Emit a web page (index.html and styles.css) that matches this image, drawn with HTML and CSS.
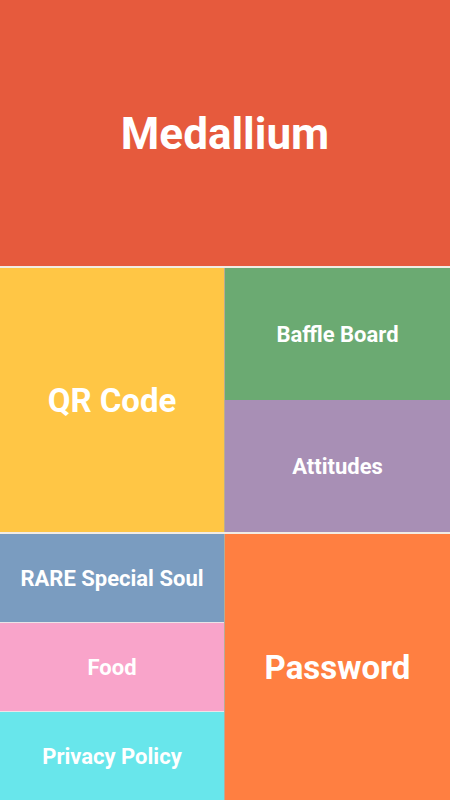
FILE: index.html
```html
<!DOCTYPE html>
<html>
<head>
<meta charset="utf-8">
<link rel="stylesheet" href="styles.css">
</head>
<body>
<div class="app">
  <div class="tile red big">Medallium</div>
  <div class="row">
    <div class="tile yellow mid">QR Code</div>
    <div class="col">
      <div class="tile green small">Baffle Board</div>
      <div class="tile purple small">Attitudes</div>
    </div>
  </div>
  <div class="row">
    <div class="col gapped">
      <div class="tile blue small">RARE Special Soul</div>
      <div class="tile pink small">Food</div>
      <div class="tile cyan small">Privacy Policy</div>
    </div>
    <div class="tile orange mid">Password</div>
  </div>
</div>
</body>
</html>
```
FILE: styles.css
```css
html, body {
  margin: 0;
  padding: 0;
}
body {
  width: 450px;
  height: 800px;
  overflow: hidden;
  font-family: Roboto, "Liberation Sans", sans-serif;
}
.app {
  display: grid;
  grid-template-rows: 266px 264px 266px;
  row-gap: 2px;
  height: 800px;
  background: #f2ece4;
}
.row {
  display: grid;
  grid-template-columns: 224px 1fr;
  column-gap: 1px;
  background: #b9ab95;
}
.col {
  display: grid;
  grid-template-rows: 1fr 1fr;
}
.col.gapped {
  grid-template-rows: 88px 88px 1fr;
  row-gap: 1px;
  background: #ece4e8;
}
.tile {
  display: flex;
  align-items: center;
  justify-content: center;
  color: #fff;
  font-weight: 700;
  text-align: center;
}
.big { font-size: 44px; padding-top: 2px; }
.mid { font-size: 33px; }
.small { font-size: 22px; }
.red { background: #e65a3d; }
.yellow { background: #ffc645; }
.green { background: #6baa72; }
.purple { background: #a88fb5; }
.blue { background: #7a9cc0; }
.pink { background: #f9a4ca; }
.cyan { background: #68e6eb; }
.orange { background: #ff7f41; }
```
